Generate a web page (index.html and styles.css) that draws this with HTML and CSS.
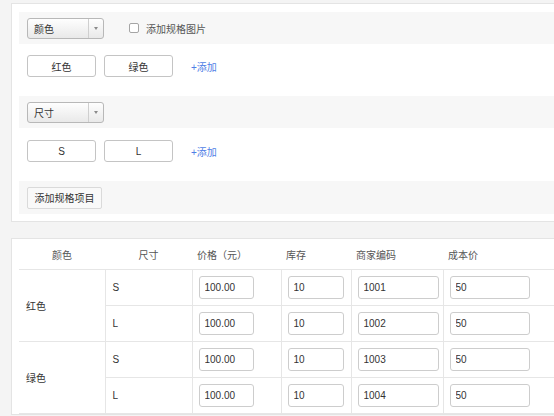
FILE: index.html
```html
<!DOCTYPE html>
<html lang="zh-CN">
<head>
<meta charset="utf-8">
<title>规格</title>
<link rel="stylesheet" href="styles.css">
</head>
<body>
<div class="page">
  <section class="panel spec-panel">
    <div class="spec-head">
      <div class="select"><span class="select-text">颜色</span><span class="select-arrow"></span></div>
      <label class="check"><span class="box"></span>添加规格图片</label>
    </div>
    <div class="spec-values">
      <button class="val">红色</button>
      <button class="val">绿色</button>
      <a class="add">+添加</a>
    </div>
    <div class="spec-head">
      <div class="select"><span class="select-text">尺寸</span><span class="select-arrow"></span></div>
    </div>
    <div class="spec-values">
      <button class="val">S</button>
      <button class="val">L</button>
      <a class="add">+添加</a>
    </div>
    <div class="spec-head foot">
      <button class="add-item">添加规格项目</button>
    </div>
  </section>

  <section class="panel table-panel">
    <table class="sku">
      <colgroup>
        <col class="c1"><col class="c2"><col class="c3"><col class="c4"><col class="c5"><col class="c6">
      </colgroup>
      <thead>
        <tr>
          <th class="center">颜色</th>
          <th class="center">尺寸</th>
          <th>价格（元）</th>
          <th>库存</th>
          <th>商家编码</th>
          <th>成本价</th>
        </tr>
      </thead>
      <tbody>
        <tr>
          <td class="color" rowspan="2">红色</td>
          <td class="sz">S</td>
          <td class="num"><input class="in w-price" value="100.00"></td>
          <td class="num"><input class="in w-stock" value="10"></td>
          <td class="num"><input class="in w-code" value="1001"></td>
          <td class="num"><input class="in w-cost" value="50"></td>
        </tr>
        <tr>
          <td class="sz">L</td>
          <td class="num"><input class="in w-price" value="100.00"></td>
          <td class="num"><input class="in w-stock" value="10"></td>
          <td class="num"><input class="in w-code" value="1002"></td>
          <td class="num"><input class="in w-cost" value="50"></td>
        </tr>
        <tr>
          <td class="color" rowspan="2">绿色</td>
          <td class="sz">S</td>
          <td class="num"><input class="in w-price" value="100.00"></td>
          <td class="num"><input class="in w-stock" value="10"></td>
          <td class="num"><input class="in w-code" value="1003"></td>
          <td class="num"><input class="in w-cost" value="50"></td>
        </tr>
        <tr class="last">
          <td class="sz">L</td>
          <td class="num"><input class="in w-price" value="100.00"></td>
          <td class="num"><input class="in w-stock" value="10"></td>
          <td class="num"><input class="in w-code" value="1004"></td>
          <td class="num"><input class="in w-cost" value="50"></td>
        </tr>
      </tbody>
    </table>
  </section>
</div>
</body>
</html>
```

FILE: styles.css
```css
html, body {
  margin: 0;
  padding: 0;
}
body {
  background: #f4f4f4;
  overflow: hidden;
  font-family: "Liberation Sans", "Noto Sans CJK SC", sans-serif;
  font-size: 10px;
  color: #333;
}
.page {
  padding: 3px 0 0 11px;
}
.panel {
  background: #fff;
  border: 1px solid #e4e4e4;
  border-right: none;
}
.spec-panel {
  padding: 8px 0 7px 7px;
}
.spec-head {
  background: #f7f7f7;
  height: 32px;
  padding: 0 8px;
  display: flex;
  align-items: center;
}
.spec-head.foot {
  height: 33px;
}
.select {
  box-sizing: border-box;
  width: 77px;
  height: 21px;
  border: 1px solid #b8b8b8;
  border-radius: 3px;
  background: linear-gradient(#fefefe, #e9e9e9);
  display: flex;
  align-items: stretch;
}
.select-text {
  flex: 1;
  display: flex;
  align-items: center;
  padding-left: 6px;
  color: #333;
}
.select-arrow {
  width: 14px;
  border-left: 1px solid #cfcfcf;
  display: flex;
  align-items: center;
  justify-content: center;
}
.select-arrow::after {
  content: "";
  border-left: 2px solid transparent;
  border-right: 2px solid transparent;
  border-top: 3px solid #8a8a8a;
}
.check {
  margin-left: 25px;
  display: flex;
  align-items: center;
  color: #555;
}
.box {
  box-sizing: border-box;
  width: 10px;
  height: 10px;
  border: 1px solid #a5a5a5;
  border-radius: 2px;
  background: #fff;
  margin-right: 7px;
}
.spec-values {
  display: flex;
  align-items: center;
  gap: 8px;
  padding: 11px 8px 19px;
}
.spec-values + .spec-head + .spec-values {
  padding: 12px 8px 19px;
}
.val {
  box-sizing: border-box;
  width: 69px;
  height: 22px;
  border: 1px solid #c4c4c4;
  border-radius: 3px;
  background: #fff;
  font: inherit;
  color: #333;
  padding: 0;
}
.add {
  margin-left: 10px;
  color: #4f7ee6;
}
.add-item {
  box-sizing: border-box;
  width: 75px;
  height: 22px;
  border: 1px solid #dadada;
  border-radius: 2px;
  background: #f9f9f9;
  font: inherit;
  color: #333;
  padding: 0;
}
.table-panel {
  margin-top: 16px;
  padding: 0 0 0 7px;
}
.sku {
  border-collapse: collapse;
  table-layout: fixed;
  width: 100%;
}
.c1 { width: 86px; }
.c2 { width: 87px; }
.c3 { width: 89px; }
.c4 { width: 70px; }
.c5 { width: 92px; }
.sku th {
  height: 30px;
  font-weight: normal;
  color: #555;
  text-align: left;
  padding: 0 5px;
  border-bottom: 1px solid #e6e6e6;
}
.sku th.center {
  text-align: center;
}
.sku td {
  height: 35px;
  padding: 0 7px;
  border-top: 1px solid #e6e6e6;
}
.sku td.sz,
.sku td.num {
  border-left: 1px solid #e6e6e6;
}
.sku td.num {
  padding: 0 6px;
}
.sku tr.last td,
.sku td.color {
  border-bottom: 1px solid #e6e6e6;
}
.in {
  box-sizing: border-box;
  height: 23px;
  border: 1px solid #cdcdcd;
  border-radius: 3px;
  padding: 0 5px;
  font: inherit;
  color: #333;
  display: block;
}
.w-price { width: 55px; }
.w-stock { width: 56px; }
.w-code { width: 81px; }
.w-cost { width: 80px; }
```
